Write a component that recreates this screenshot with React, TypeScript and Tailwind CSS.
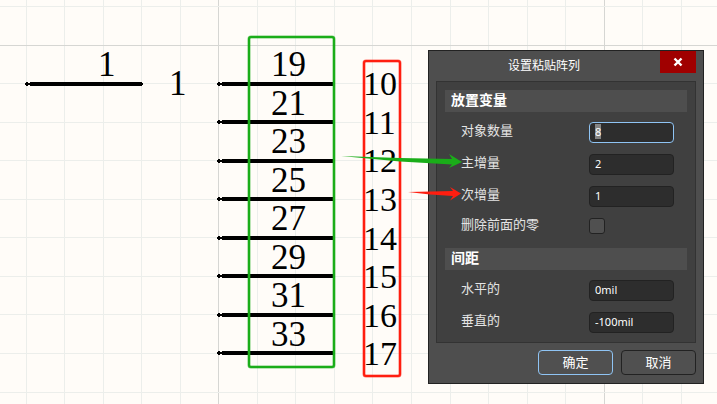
import { useEffect, useRef, type ReactNode } from 'react';

const GRID_STEP = 38.55;
const columns = Array.from({ length: 60 }, (_, i) => ({
  at: Math.floor(26 + GRID_STEP * i),
  major: i % 10 === 5,
}));
const rows = Array.from({ length: 40 }, (_, i) => ({
  at: Math.floor(6.5 + GRID_STEP * i),
  major: i % 10 === 1,
}));

const pins = [
  { y: 84, name: '19', nameY: 76, number: '10', numberY: 95 },
  { y: 122, name: '21', nameY: 115, number: '11', numberY: 134 },
  { y: 161, name: '23', nameY: 153, number: '12', numberY: 172 },
  { y: 199, name: '25', nameY: 192, number: '13', numberY: 211 },
  { y: 238, name: '27', nameY: 230, number: '14', numberY: 250 },
  { y: 276, name: '29', nameY: 269, number: '15', numberY: 288 },
  { y: 315, name: '31', nameY: 307, number: '16', numberY: 327 },
  { y: 353, name: '33', nameY: 346, number: '17', numberY: 365 },
];

function Pin({ x, y }: { x: number; y: number }) {
  return (
    <g fill="#000" shapeRendering="crispEdges">
      <rect x={x - 1} y={y - 1} width={118} height={2} />
      <rect x={x} y={y - 2} width={2} height={4} />
      <rect x={x + 4} y={y - 2} width={112} height={4} />
    </g>
  );
}

function Schematic() {
  return (
    <svg className="absolute inset-0 h-full w-full font-['Liberation_Serif',serif] text-[35px]" aria-label="Schematic">
      <g shapeRendering="crispEdges">
        {columns.map((c) => (
          <rect key={c.at} x={c.at} y={0} width={1} height="100%" fill={c.major ? '#d6d6d3' : '#eceeeb'} />
        ))}
        {rows.map((r) => (
          <rect key={r.at} x={0} y={r.at} width="100%" height={1} fill={r.major ? '#d6d6d3' : '#eceeeb'} />
        ))}
      </g>
      <Pin x={26} y={84} />
      <text x={98} y={76}>1</text>
      <text x={169} y={95}>1</text>
      {pins.map((p) => (
        <g key={p.y}>
          <Pin x={218} y={p.y} />
          <text x={306} y={p.nameY} textAnchor="end">{p.name}</text>
          <text x={363} y={p.numberY} className="text-[34px]">{p.number}</text>
        </g>
      ))}
      <rect x={249} y={37} width={85} height={330} rx={2} fill="none" stroke="#1aad19" strokeOpacity={0.6} strokeWidth={3} />
      <rect x={249} y={37} width={85} height={330} rx={2} fill="none" stroke="#1aad19" strokeWidth={2} />
      <rect x={364} y={61} width={36} height={315} rx={2} fill="none" stroke="#ff1e10" strokeOpacity={0.6} strokeWidth={3} />
      <rect x={364} y={61} width={36} height={315} rx={2} fill="none" stroke="#ff1e10" strokeWidth={2} />
    </svg>
  );
}

function Arrows() {
  return (
    <svg className="pointer-events-none absolute inset-0 h-full w-full" aria-hidden="true">
      <path d="M341 156 L400 158 L452 159 L449 154 L462 162 L449 168 L452 164.500 L400 161.500 Z" fill="#1aad19" />
      <path d="M408 192 L453 191 L450 187 L461 193.500 L450 200.500 L453 196 L430 194.500 Z" fill="#ff1e10" />
    </svg>
  );
}

function SectionTitle({ children }: { children: ReactNode }) {
  return <h2 className="h-[22px] bg-[#4e4e4e] px-1.5 text-sm leading-[18px] font-bold text-white">{children}</h2>;
}

function Field({ id, label, value, selected = false }: { id: string; label: string; value: string; selected?: boolean }) {
  const ref = useRef<HTMLInputElement>(null);
  useEffect(() => {
    if (selected) {
      ref.current?.focus();
      ref.current?.select();
    }
  }, [selected]);
  return (
    <div className="flex h-8 items-center justify-between pr-[13px] pl-4">
      <label htmlFor={id} className="pb-1 text-[13px] leading-5 text-[#e4e4e4]">{label}</label>
      <input
        ref={ref}
        id={id}
        defaultValue={value}
        className="h-[21px] w-[85px] rounded border border-[#222] bg-[#2d2d2d] px-[5px] pb-px font-['Noto_Sans',sans-serif] text-[11px] leading-4 text-white outline-none selection:bg-[#848484] selection:text-white focus:border-[#8fc4f4]"
      />
    </div>
  );
}

function PasteArrayDialog() {
  return (
    <form
      role="dialog"
      aria-labelledby="dialog-title"
      onSubmit={(e) => e.preventDefault()}
      className="absolute top-[50px] left-[428px] w-[276px] border border-[#222] bg-[#4e4e4e] px-[7px] pb-2 font-['Noto_Sans_CJK_SC',sans-serif]"
    >
      <header className="flex h-[30px] items-start">
        <h1 id="dialog-title" className="flex-1 pt-1 pr-2 text-center text-xs leading-5 text-white">设置粘贴阵列</h1>
        <button type="button" aria-label="关闭" className="flex h-[22px] w-9 items-center justify-center bg-[#a00000]">
          <svg width="10" height="10" viewBox="0 0 10 10" stroke="#fff" strokeWidth="2.4" aria-hidden="true">
            <path d="M1.500 1.500 L8.500 8.500 M8.500 1.500 L1.500 8.500" />
          </svg>
        </button>
      </header>
      <div className="border border-[#333] bg-[#404040] px-2 pt-2 pb-1">
        <section>
          <SectionTitle>放置变量</SectionTitle>
          <div className="pt-1 pb-2">
            <Field id="count" label="对象数量" value="8" selected />
            <Field id="primary" label="主增量" value="2" />
            <Field id="secondary" label="次增量" value="1" />
            <div className="flex h-7 items-center pr-[13px] pl-4">
              <label htmlFor="zeros" className="flex-1 pb-1 text-[13px] leading-5 text-[#e4e4e4]">删除前面的零</label>
              <div className="flex w-[85px]">
                <input
                  id="zeros"
                  type="checkbox"
                  className="size-4 appearance-none rounded-[3px] border border-[#222] bg-[#505050] checked:bg-[#8fc4f4]"
                />
              </div>
            </div>
          </div>
        </section>
        <section>
          <SectionTitle>间距</SectionTitle>
          <div className="pt-1">
            <Field id="horizontal" label="水平的" value="0mil" />
            <Field id="vertical" label="垂直的" value="-100mil" />
          </div>
        </section>
      </div>
      <footer className="flex justify-end gap-2 pt-[7px] text-[13px] leading-5 text-white">
        <button type="submit" className="h-[25px] w-[75px] rounded border border-[#8fc4f4] bg-[#505050] pb-0.5">确定</button>
        <button type="button" className="h-[25px] w-[75px] rounded border border-[#222] bg-[#505050] pb-0.5">取消</button>
      </footer>
    </form>
  );
}

export default function App() {
  return (
    <main className="relative min-h-screen overflow-hidden bg-[#fffcf8]">
      <Schematic />
      <PasteArrayDialog />
      <Arrows />
    </main>
  );
}
